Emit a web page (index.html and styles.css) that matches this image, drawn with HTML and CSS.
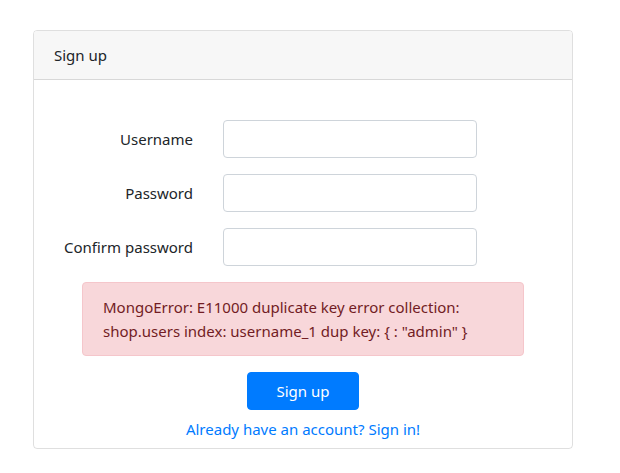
FILE: index.html
```html
<!DOCTYPE html>
<html>
<head>
<meta charset="utf-8">
<link rel="stylesheet" href="styles.css">
</head>
<body>
<div class="card">
  <div class="card-header">Sign up</div>
  <div class="card-body">
    <form class="form">
      <div class="row">
        <label class="label">Username</label>
        <div class="field"><input class="input" type="text"></div>
      </div>
      <div class="row">
        <label class="label">Password</label>
        <div class="field"><input class="input" type="password"></div>
      </div>
      <div class="row">
        <label class="label">Confirm password</label>
        <div class="field"><input class="input" type="password"></div>
      </div>
      <div class="alert">MongoError: E11000 duplicate key error collection: shop.users index: username_1 dup key: { : "admin" }</div>
      <div class="actions">
        <button class="btn" type="button">Sign up</button>
        <a class="link" href="#">Already have an account? Sign in!</a>
      </div>
    </form>
  </div>
</div>
</body>
</html>
```
FILE: styles.css
```css
* { box-sizing: border-box; }
html, body { margin: 0; padding: 0; background: #fff; }
body {
  font-family: "Noto Sans", "Open Sans", sans-serif;
  font-size: 15px;
  line-height: 24px;
  color: #212529;
  padding: 30px 0 0 33px;
}
.card {
  width: 540px;
  height: 419px;
  border: 1px solid rgba(0,0,0,.125);
  border-radius: 4px;
  display: flex;
  flex-direction: column;
}
.card-header {
  padding: 12px 20px;
  background: #f7f7f7;
  border-bottom: 1px solid rgba(0,0,0,.125);
  border-radius: 3px 3px 0 0;
}
.card-body {
  padding: 40px 0 0 0;
}
.form { display: flex; flex-direction: column; }
.row {
  display: flex;
  align-items: center;
  margin-bottom: 16px;
}
.label {
  width: 159px;
  text-align: right;
}
.field { padding-left: 30px; }
.input {
  display: block;
  width: 254px;
  height: 38px;
  border: 1px solid #ced4da;
  border-radius: 4px;
  background: #fff;
  font: inherit;
  padding: 6px 12px;
}
.alert {
  margin: 0 0 16px 48px;
  width: 442px;
  padding: 12px 20px;
  background: #f8d7da;
  border: 1px solid #f5c6cb;
  border-radius: 4px;
  color: #721c24;
}
.actions {
  display: flex;
  flex-direction: column;
  align-items: center;
  width: 538px;
}
.btn {
  font: inherit;
  color: #fff;
  background: #007bff;
  border: 1px solid #007bff;
  border-radius: 4px;
  width: 112px;
  height: 38px;
  padding: 6px 0;
  margin-bottom: 7px;
}
.link {
  color: #007bff;
  text-decoration: none;
}
```
